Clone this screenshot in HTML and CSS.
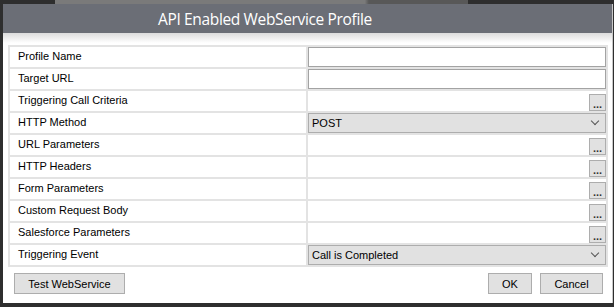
FILE: index.html
```html
<!DOCTYPE html>
<html lang="en">
<head>
    <meta charset="UTF-8">
    <title>API Enabled WebService Profile</title>
    <link rel="stylesheet" href="styles.css">
</head>
<body>
    <div class="desktop">
        <div class="bg-window"></div>
        <div class="dialog">
            <div class="dialog-title">API Enabled WebService Profile</div>
            <div class="dialog-body">
                <div class="form-grid">
                    <div class="label">Profile Name</div>
                    <div class="value"><input class="text-input" type="text"></div>

                    <div class="label">Target URL</div>
                    <div class="value"><input class="text-input" type="text"></div>

                    <div class="label">Triggering Call Criteria</div>
                    <div class="value picker"><button class="dots">...</button></div>

                    <div class="label">HTTP Method</div>
                    <div class="value"><div class="select">POST<span class="chevron"></span></div></div>

                    <div class="label">URL Parameters</div>
                    <div class="value picker"><button class="dots">...</button></div>

                    <div class="label">HTTP Headers</div>
                    <div class="value picker"><button class="dots">...</button></div>

                    <div class="label">Form Parameters</div>
                    <div class="value picker"><button class="dots">...</button></div>

                    <div class="label">Custom Request Body</div>
                    <div class="value picker"><button class="dots">...</button></div>

                    <div class="label">Salesforce Parameters</div>
                    <div class="value picker"><button class="dots">...</button></div>

                    <div class="label">Triggering Event</div>
                    <div class="value"><div class="select">Call is Completed<span class="chevron"></span></div></div>
                </div>

                <div class="actions">
                    <button class="btn btn-test">Test WebService</button>
                    <div class="actions-right">
                        <button class="btn btn-ok">OK</button>
                        <button class="btn btn-cancel">Cancel</button>
                    </div>
                </div>
            </div>
        </div>
    </div>
</body>
</html>
```

FILE: styles.css
```css
body {
    margin: 0;
    background: #2e2e2e;
    font-family: "Liberation Sans", Arial, sans-serif;
}
.desktop {
    position: relative;
    width: 614px;
    height: 307px;
    overflow: hidden;
}
.bg-window {
    position: absolute;
    left: 55px;
    top: 0;
    width: 413px;
    height: 4px;
    background: linear-gradient(90deg, #7a7a7a 0%, #7a7a7a 75%, #585858 76%);
}
.dialog {
    position: absolute;
    left: 3px;
    top: 4px;
    width: 609px;
    height: 299px;
    background: #fff;
    border-right: 1px solid #c8c8c8;
}
.dialog-title {
    height: 29px;
    background: #6b6e76;
    color: #fff;
    font-family: "Open Sans", sans-serif;
    font-size: 15.5px;
    letter-spacing: -0.35px;
    line-height: 30px;
    padding-left: 155px;
}
.dialog-body {
    padding: 12px 4px 0 5px;
    background: linear-gradient(#dcdcdc, #fff 10px);
}
.form-grid {
    display: grid;
    grid-template-columns: 296px 1fr;
    grid-auto-rows: 20px;
    gap: 2px;
    padding: 2px;
    background: #e3e3e3;
    font-size: 11px;
}
.label {
    background: #fff;
    padding-left: 8px;
    line-height: 19px;
    color: #000;
}
.value {
    background: #fff;
    position: relative;
}
.text-input {
    box-sizing: border-box;
    width: 100%;
    height: 20px;
    margin: 0;
    border: 1px solid #a3a3a3;
    background: #fff;
}
.picker .dots {
    position: absolute;
    right: 0;
    bottom: 0;
}
.dots {
    box-sizing: border-box;
    width: 17px;
    height: 17px;
    margin: 0;
    padding: 0;
    border: 1px solid #adadad;
    background: #e1e1e1;
    font-family: inherit;
    font-size: 11px;
    font-weight: bold;
    line-height: 18px;
    color: #333;
}
.select {
    box-sizing: border-box;
    position: relative;
    height: 20px;
    border: 1px solid #adadad;
    background: #e1e1e1;
    padding-left: 3px;
    line-height: 18px;
    color: #000;
}
.chevron {
    position: absolute;
    right: 7px;
    top: 4px;
    width: 5px;
    height: 5px;
    border-right: 1px solid #555;
    border-bottom: 1px solid #555;
    transform: rotate(45deg);
}
.actions {
    display: flex;
    justify-content: space-between;
    padding: 6px 5px 0 6px;
}
.actions-right {
    display: flex;
    gap: 8px;
}
.btn {
    box-sizing: border-box;
    height: 21px;
    margin: 0;
    padding: 0;
    border: 1px solid #adadad;
    background: #e1e1e1;
    font-family: inherit;
    font-size: 11px;
    color: #000;
}
.btn-test { width: 111px; }
.btn-ok { width: 44px; }
.btn-cancel { width: 63px; }
```
